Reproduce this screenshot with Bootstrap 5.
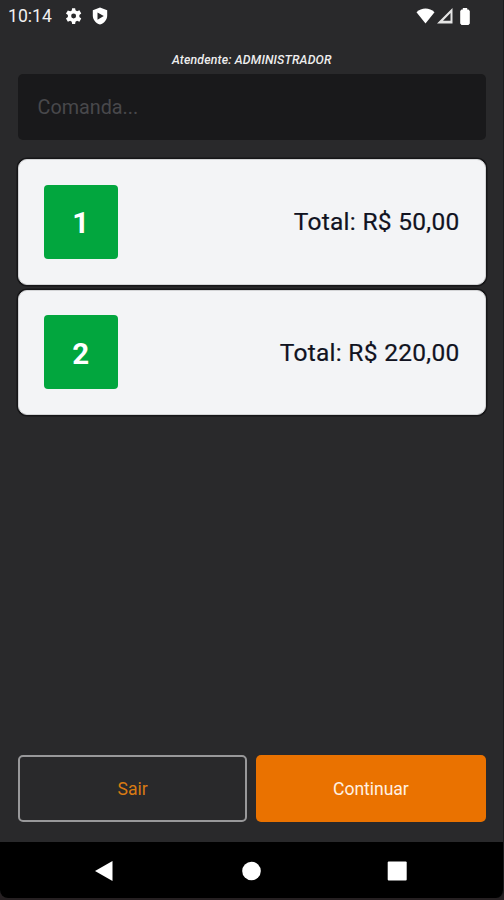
<!DOCTYPE html>
<html lang="pt-BR">
<head>
<meta charset="utf-8">
<meta name="viewport" content="width=device-width, initial-scale=1">
<title>Comandas</title>
<link href="https://cdn.jsdelivr.net/npm/bootstrap@5.3.0/dist/css/bootstrap.min.css" rel="stylesheet">
<style>
body{font-family:Roboto,"Liberation Sans",sans-serif;background:#262022;color:#fff;overflow:hidden}
.phone{height:898px;background:#29292b;border-radius:0 0 8px 8px;border-right:1px solid #1b1b1d;overflow:hidden}
.status{height:32px;padding-left:8px;padding-right:33px}
.clock{font-size:17.6px;line-height:32px;width:57px;color:#f0f0f0}
.screen{padding:0 17.5px 20px 18px}
.attendant{font-size:12.3px;line-height:16px;height:22px;margin-top:20px;font-style:italic;font-weight:500;color:#eee;letter-spacing:.16px}
.order-input,.order-input:focus{height:65.5px;padding:2px 19.5px 0;font-size:19.8px;background:#19191b;color:#ddd;border:0;border-radius:5px;letter-spacing:0;box-shadow:none}
.order-input::placeholder{color:#48484b;opacity:1}
.orders{margin-top:19.5px;gap:5px}
.order{height:125.5px;padding:0 25px 0 24.5px;background:#f3f4f6;color:#11131f;border:1px solid #d3d4d6;border-radius:9px;box-shadow:0 0 0 1.5px #161618}
.number{width:74.5px;height:74px;padding-top:3px;background:#02a63e;border-radius:4px;font-size:29.5px;font-weight:700;color:#fff}
.total{font-size:24.5px;letter-spacing:.28px;padding-top:2px;-webkit-text-stroke:.2px #11131f}
.action{height:67px;font-size:17.6px;border-radius:5px;padding-top:8px;letter-spacing:-.05px}
.leave{color:#d97a13;border:2px solid #98989a}
.continue{color:#fff1e3;background:#ea7200;border:0}
.leave:hover{color:#d97a13;border-color:#fff}
.continue:hover{color:#fff;background:#d86900}
.actions{gap:9px}
.system-nav{height:56px;background:#000}
.shield{margin-left:5px}
.wifi{margin-right:2px}
.battery{margin-left:7px}
</style>
<script src="https://cdn.jsdelivr.net/npm/bootstrap@5.3.0/dist/js/bootstrap.bundle.min.js"></script>
</head>
<body>
<div class="phone d-flex flex-column">
  <header class="status d-flex align-items-center">
    <span class="clock">10:14</span>
    <svg width="18" height="18" viewBox="0 0 24 24" fill="#fff" aria-hidden="true"><path d="M19.1 13.2a7 7 0 0 0 0-2.4l2.6-2-2.5-4.3-3.1 1.2a7 7 0 0 0-2.1-1.2L13.500 1.500h-4L9 4.500a7 7 0 0 0-2.100 1.200L3.800 4.500 1.300 8.800l2.600 2a7 7 0 0 0 0 2.400l-2.600 2 2.500 4.300 3.100-1.200A7 7 0 0 0 9 19.500l.500 3h4l.500-3a7 7 0 0 0 2.100-1.200l3.100 1.200 2.500-4.300zM11.500 15.300a3.300 3.300 0 1 1 0-6.600 3.300 3.300 0 0 1 0 6.600z"/></svg>
    <svg class="shield ms-2" width="18" height="18" viewBox="0 0 18 18" fill="#fff" aria-hidden="true"><path fill-rule="evenodd" d="M9 .500 1.800 3.200v5.200c0 4.200 2.900 7.600 7.200 9.200 4.300-1.600 7.200-5 7.200-9.200V3.200zM6.500 5.500v7.200L12.800 9z"/></svg>
    <svg class="wifi ms-auto" width="19" height="16" viewBox="0 0 18 16" fill="#fff" aria-hidden="true"><path d="M0 4.200C5-.700 13-.700 18 4.200L9 15.500z"/></svg>
    <svg width="16" height="16" viewBox="0 0 16 16" aria-hidden="true"><path fill="#e4e4e4" fill-rule="evenodd" d="M15.500 0v15.500H0zM13.500 5 6 12.800h7.500z"/></svg>
    <svg class="battery" width="10" height="17" viewBox="0 0 10 17" fill="#fff" aria-hidden="true"><path d="M2.800 0h4.400v1.500h1.300L9.800 3v12.500L8.500 17h-7L.200 15.500V3l1.300-1.500h1.300z"/></svg>
  </header>
  <main class="screen flex-grow-1 d-flex flex-column">
    <div class="attendant text-center">Atendente: ADMINISTRADOR</div>
    <input class="form-control order-input" type="text" placeholder="Comanda..." aria-label="Comanda">
    <div class="orders d-flex flex-column">
      <div class="order d-flex align-items-center justify-content-between">
        <div class="number d-flex align-items-center justify-content-center">1</div>
        <div class="total">Total: R$ 50,00</div>
      </div>
      <div class="order d-flex align-items-center justify-content-between">
        <div class="number d-flex align-items-center justify-content-center">2</div>
        <div class="total">Total: R$ 220,00</div>
      </div>
    </div>
    <div class="actions d-flex mt-auto">
      <button type="button" class="btn action leave w-50">Sair</button>
      <button type="button" class="btn action continue w-50">Continuar</button>
    </div>
  </main>
  <nav class="system-nav d-flex align-items-center" aria-label="Sistema">
    <svg width="503" height="56" viewBox="0 842 503 56" fill="#fff" aria-hidden="true"><path d="M112.500 861v20L95 871z"/><circle cx="251.500" cy="871" r="9.300"/><rect x="387.700" y="861.500" width="19" height="19" rx="1"/></svg>
  </nav>
</div>
</body>
</html>
